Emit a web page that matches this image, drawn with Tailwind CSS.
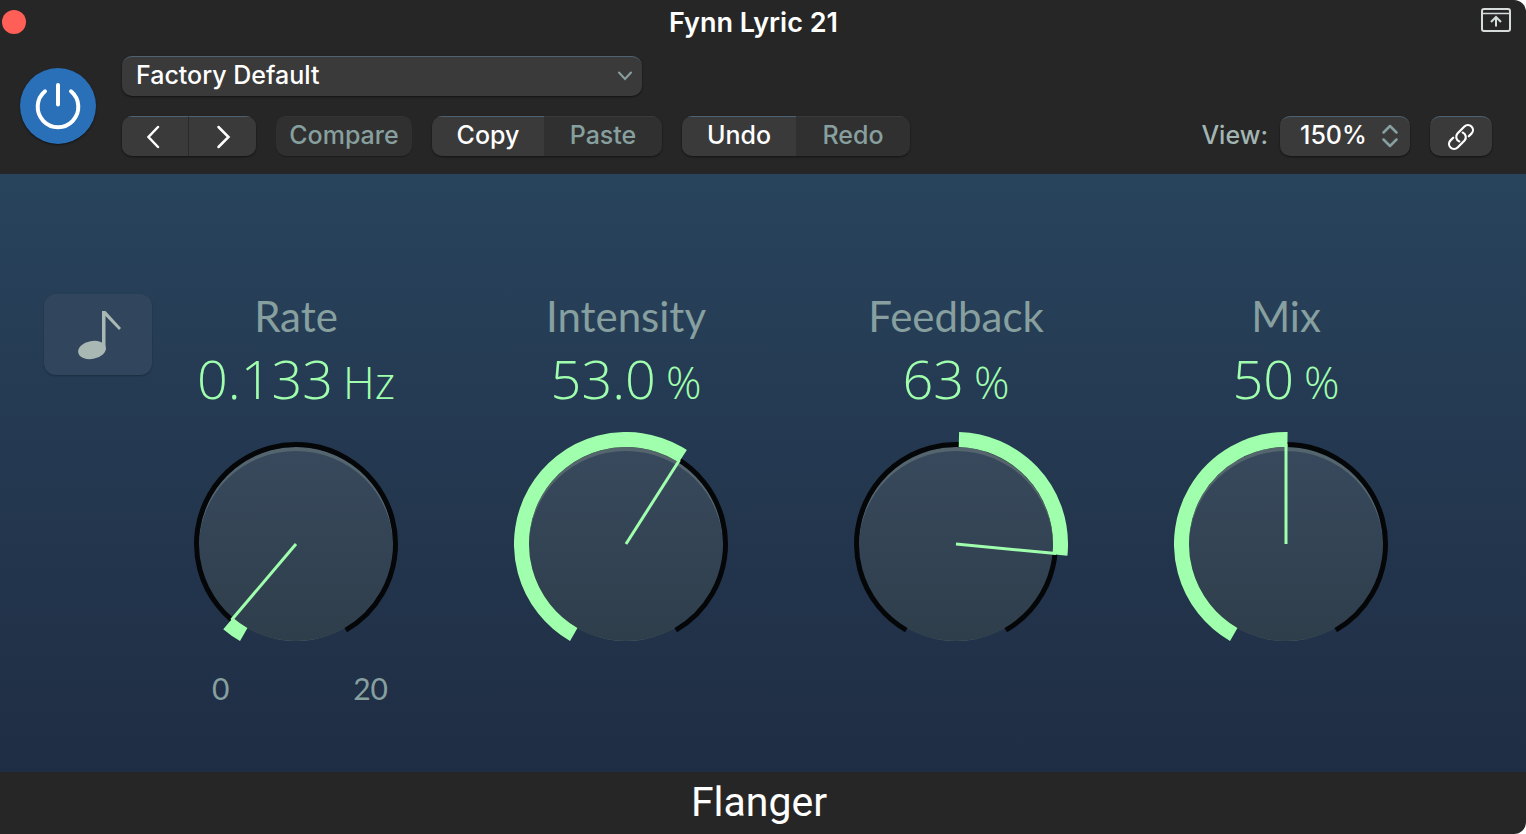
<!doctype html>
<html lang="en">
  <head>
    <meta charset="UTF-8" />
    <meta name="viewport" content="width=device-width, initial-scale=1.0" />
    <script src="https://cdn.jsdelivr.net/npm/@tailwindcss/browser@4"></script>
    <title>Flanger</title>
  </head>
  <body class="bg-white">
    <div
      class="flex min-h-screen flex-col overflow-hidden rounded-r-xl bg-[#262626] font-[Inter,sans-serif] text-[25px] font-medium leading-9 text-white"
    >
      <header class="pb-[18px]">
        <div class="flex h-11 items-center pl-0.5 pr-[15px]">
          <button class="size-6 rounded-full bg-[#ff5f57]" aria-label="Close"></button>
          <h1 class="flex-1 pt-0.5 text-center text-[27px] font-semibold">Fynn Lyric 21</h1>
          <button class="mb-1" aria-label="Detach window">
            <svg class="h-6 w-[30px]" viewBox="0 0 30 24" fill="none" stroke="#d5dcdb" stroke-width="2">
              <rect x="1" y="1" width="28" height="22" rx="2" />
              <path d="M1 5.500h28" stroke-width="1.500" />
              <path d="M15 18.500v-9M10 14l5-5 5 5" />
            </svg>
          </button>
        </div>

        <div class="flex items-center gap-[26px] pl-5 pr-[34px] pt-3">
          <button
            class="size-[76px] shrink-0 rounded-full bg-[#2970b9] shadow-[0_1px_2px_#0008]"
            aria-label="Power"
          >
            <svg class="size-full" viewBox="0 0 76 76" fill="none" stroke="#fff" stroke-width="4" stroke-linecap="round">
              <path d="M38 17v19.500M25 23.300a20.300 20.300 0 1 0 26 0" />
            </svg>
          </button>

          <div class="flex-1 space-y-5">
            <div class="grid w-[520px]">
              <select
                class="col-start-1 row-start-1 h-10 appearance-none rounded-[10px] border-t border-[#4d6272] bg-[#3a3a3a] pb-1 pl-3.5 pr-10 shadow-[0_1px_2px_#0008]"
                aria-label="Preset"
              >
                <option>Factory Default</option>
              </select>
              <svg
                class="pointer-events-none col-start-1 row-start-1 mr-2.5 h-2.5 w-3.5 self-center justify-self-end"
                viewBox="0 0 14 10"
                fill="none"
                stroke="#87a09f"
                stroke-width="2"
                stroke-linecap="round"
              >
                <path d="M1 1.500l6 6.500 6-6.500" />
              </svg>
            </div>

            <div class="flex items-center gap-5">
              <div class="flex h-10 overflow-hidden rounded-[10px] shadow-[0_1px_2px_#0008]">
                <button
                  class="grid w-[67px] place-items-center border-r border-t border-r-[#2b2b2b] border-t-[#4d6272] bg-[#3a3a3a]"
                  aria-label="Previous preset"
                >
                  <svg class="h-6 w-4" viewBox="0 0 16 24" fill="none" stroke="#fff" stroke-width="2.500" stroke-linecap="round">
                    <path d="M11 2L1.500 12 11 22" />
                  </svg>
                </button>
                <button
                  class="grid w-[67px] place-items-center border-t border-[#4d6272] bg-[#3a3a3a]"
                  aria-label="Next preset"
                >
                  <svg class="h-6 w-4" viewBox="0 0 16 24" fill="none" stroke="#fff" stroke-width="2.500" stroke-linecap="round">
                    <path d="M3.500 2L13.500 12 3.500 22" />
                  </svg>
                </button>
              </div>

              <button
                class="h-10 w-[136px] rounded-[10px] border-t border-[#343434] bg-[#303030] pb-1 text-[#87a09f] shadow-[0_1px_1px_#0004]"
                disabled
              >
                Compare
              </button>

              <div class="flex h-10 overflow-hidden rounded-[10px] shadow-[0_1px_2px_#0008]">
                <button class="w-[112px] border-t border-[#4d6272] bg-[#3a3a3a] pb-1">Copy</button>
                <button class="w-[118px] border-t border-[#3a3a3a] bg-[#303030] pb-1 text-[#87a09f]" disabled>
                  Paste
                </button>
              </div>

              <div class="flex h-10 overflow-hidden rounded-[10px] shadow-[0_1px_2px_#0008]">
                <button class="w-[114px] border-t border-[#4d6272] bg-[#3a3a3a] pb-1">Undo</button>
                <button class="w-[114px] border-t border-[#3a3a3a] bg-[#303030] pb-1 text-[#87a09f]" disabled>
                  Redo
                </button>
              </div>

              <div class="ml-auto flex items-center gap-3">
                <label for="view" class="pb-0.5 text-[#a3b5b3]">View:</label>
                <div class="grid w-[130px]">
                  <select
                    id="view"
                    class="col-start-1 row-start-1 h-10 appearance-none rounded-[10px] border-t border-[#4d6272] bg-[#3a3a3a] pb-1 pl-5 shadow-[0_1px_2px_#0008]"
                  >
                    <option>150%</option>
                  </select>
                  <svg
                    class="pointer-events-none col-start-1 row-start-1 mr-3 h-6 w-4 self-center justify-self-end"
                    viewBox="0 0 16 24"
                    fill="none"
                    stroke="#87a09f"
                    stroke-width="2.500"
                    stroke-linecap="round"
                    stroke-linejoin="round"
                  >
                    <path d="M1.500 8.500L8 2l6.500 6.500M1.500 15.500L8 22l6.500-6.500" />
                  </svg>
                </div>
              </div>

              <button
                class="grid h-10 w-[62px] place-items-center rounded-[10px] border-t border-[#4d6272] bg-[#3a3a3a] shadow-[0_1px_2px_#0008]"
                aria-label="Link"
              >
                <svg class="size-7" viewBox="-14 -14 28 28" fill="none" stroke="#fff" stroke-width="2.200" stroke-linecap="round">
                  <g transform="rotate(-45)">
                    <path d="M6 5H9.800A5 5 0 0 0 9.800-5H0A5 5 0 0 0-4.300 2" />
                    <path d="M-6-5H-9.800A5 5 0 0 0-9.800 5H0A5 5 0 0 0 4.300-2" />
                  </g>
                </svg>
              </button>
            </div>
          </div>
        </div>
      </header>

      <main
        class="flex flex-1 items-start bg-linear-to-b from-[#28435c] to-[#1f2d44] pl-11 pr-32 pt-[120px] font-[Lato,sans-serif] font-normal"
      >
        <button
          class="mr-8 h-[81px] w-[108px] shrink-0 rounded-xl bg-[#31465c] shadow-[0_1px_2px_#0004]"
          aria-label="Sync to tempo"
        >
          <svg class="size-full" viewBox="0 0 108 81" fill="#aab8b3">
            <ellipse cx="48" cy="56" rx="14" ry="9" transform="rotate(-10 48 56)" />
            <path d="M58 17h3.500L77 34l-2 2-13.500-14v34H58z" />
          </svg>
        </button>

        <div class="flex flex-1 justify-between">
          <section class="w-56">
            <label for="rate" class="block text-center text-[42px] leading-11 text-[#87a09f]">Rate</label>
            <output
              for="rate"
              class="mt-2 flex h-16 items-baseline justify-center gap-2.5 font-['Open_Sans',sans-serif] text-[54px] font-light leading-16 text-[#a0ffad]"
              >0.133 <span class="text-[44px] leading-none">Hz</span></output
            >
            <div class="relative mt-[22px]">
              <svg class="w-full" viewBox="-112 -112 224 224" fill="none">
                <defs>
                  <linearGradient id="face" x1="0" y1="0" x2="0" y2="1">
                    <stop offset="0" stop-color="#38495d" />
                    <stop offset="1" stop-color="#2e3e4b" />
                  </linearGradient>
                </defs>
                <circle r="97" fill="#54656d" />
                <ellipse cy="2" rx="97" ry="95" fill="url(#face)" />
                <circle r="99.500" stroke="#050608" stroke-width="5" pathLength="360" stroke-dasharray="300 60" transform="rotate(120)" />
                <circle r="104.500" stroke="#a0ffad" stroke-width="15" pathLength="360" stroke-dasharray="10.500 360" transform="rotate(120)" />
                <path d="M0 0L-64.500 76" stroke="#a0ffad" stroke-width="3" />
              </svg>
              <input id="rate" type="range" min="0" max="20" step="0.001" value="0.133" class="absolute inset-0 size-full opacity-0" />
            </div>
            <div class="mt-4 flex justify-between pl-7 pr-5 text-[30px] leading-8 text-[#87a09f]">
              <span>0</span>
              <span>20</span>
            </div>
          </section>

          <section class="w-56">
            <label for="intensity" class="block text-center text-[42px] leading-11 text-[#87a09f]">Intensity</label>
            <output
              for="intensity"
              class="mt-2 flex h-16 items-baseline justify-center gap-2.5 font-['Open_Sans',sans-serif] text-[54px] font-light leading-16 text-[#a0ffad]"
              >53.0 <span class="text-[44px] leading-none">%</span></output
            >
            <div class="relative mt-[22px]">
              <svg class="w-full" viewBox="-112 -112 224 224" fill="none">
                <circle r="97" fill="#54656d" />
                <ellipse cy="2" rx="97" ry="95" fill="url(#face)" />
                <circle r="99.500" stroke="#050608" stroke-width="5" pathLength="360" stroke-dasharray="300 60" transform="rotate(120)" />
                <circle r="104.500" stroke="#a0ffad" stroke-width="15" pathLength="360" stroke-dasharray="183 360" transform="rotate(120)" />
                <path d="M0 0L53.500-84" stroke="#a0ffad" stroke-width="3" />
              </svg>
              <input id="intensity" type="range" min="0" max="100" step="0.1" value="53" class="absolute inset-0 size-full opacity-0" />
            </div>
          </section>

          <section class="w-56">
            <label for="feedback" class="block text-center text-[42px] leading-11 text-[#87a09f]">Feedback</label>
            <output
              for="feedback"
              class="mt-2 flex h-16 items-baseline justify-center gap-2.5 font-['Open_Sans',sans-serif] text-[54px] font-light leading-16 text-[#a0ffad]"
              >63 <span class="text-[44px] leading-none">%</span></output
            >
            <div class="relative mt-[22px]">
              <svg class="w-full" viewBox="-112 -112 224 224" fill="none">
                <circle r="97" fill="#54656d" />
                <ellipse cy="2" rx="97" ry="95" fill="url(#face)" />
                <circle r="99.500" stroke="#050608" stroke-width="5" pathLength="360" stroke-dasharray="300 60" transform="rotate(120)" />
                <circle r="104.500" stroke="#a0ffad" stroke-width="15" pathLength="360" stroke-dasharray="94.500 360" transform="rotate(-88.400)" />
                <path d="M0 0L100 9.500" stroke="#a0ffad" stroke-width="3" />
              </svg>
              <input id="feedback" type="range" min="-100" max="100" value="63" class="absolute inset-0 size-full opacity-0" />
            </div>
          </section>

          <section class="w-56">
            <label for="mix" class="block text-center text-[42px] leading-11 text-[#87a09f]">Mix</label>
            <output
              for="mix"
              class="mt-2 flex h-16 items-baseline justify-center gap-2.5 font-['Open_Sans',sans-serif] text-[54px] font-light leading-16 text-[#a0ffad]"
              >50 <span class="text-[44px] leading-none">%</span></output
            >
            <div class="relative mt-[22px]">
              <svg class="w-full" viewBox="-112 -112 224 224" fill="none">
                <circle r="97" fill="#54656d" />
                <ellipse cy="2" rx="97" ry="95" fill="url(#face)" />
                <circle r="99.500" stroke="#050608" stroke-width="5" pathLength="360" stroke-dasharray="300 60" transform="rotate(120)" />
                <circle r="104.500" stroke="#a0ffad" stroke-width="15" pathLength="360" stroke-dasharray="150.800 360" transform="rotate(120)" />
                <path d="M0 0V-100" stroke="#a0ffad" stroke-width="3" />
              </svg>
              <input id="mix" type="range" min="0" max="100" value="50" class="absolute inset-0 size-full opacity-0" />
            </div>
          </section>
        </div>
      </main>

      <footer class="h-[62px] pr-2 text-center font-[Roboto,sans-serif] text-[41px] font-normal leading-[60px]">
        Flanger
      </footer>
    </div>
  </body>
</html>
